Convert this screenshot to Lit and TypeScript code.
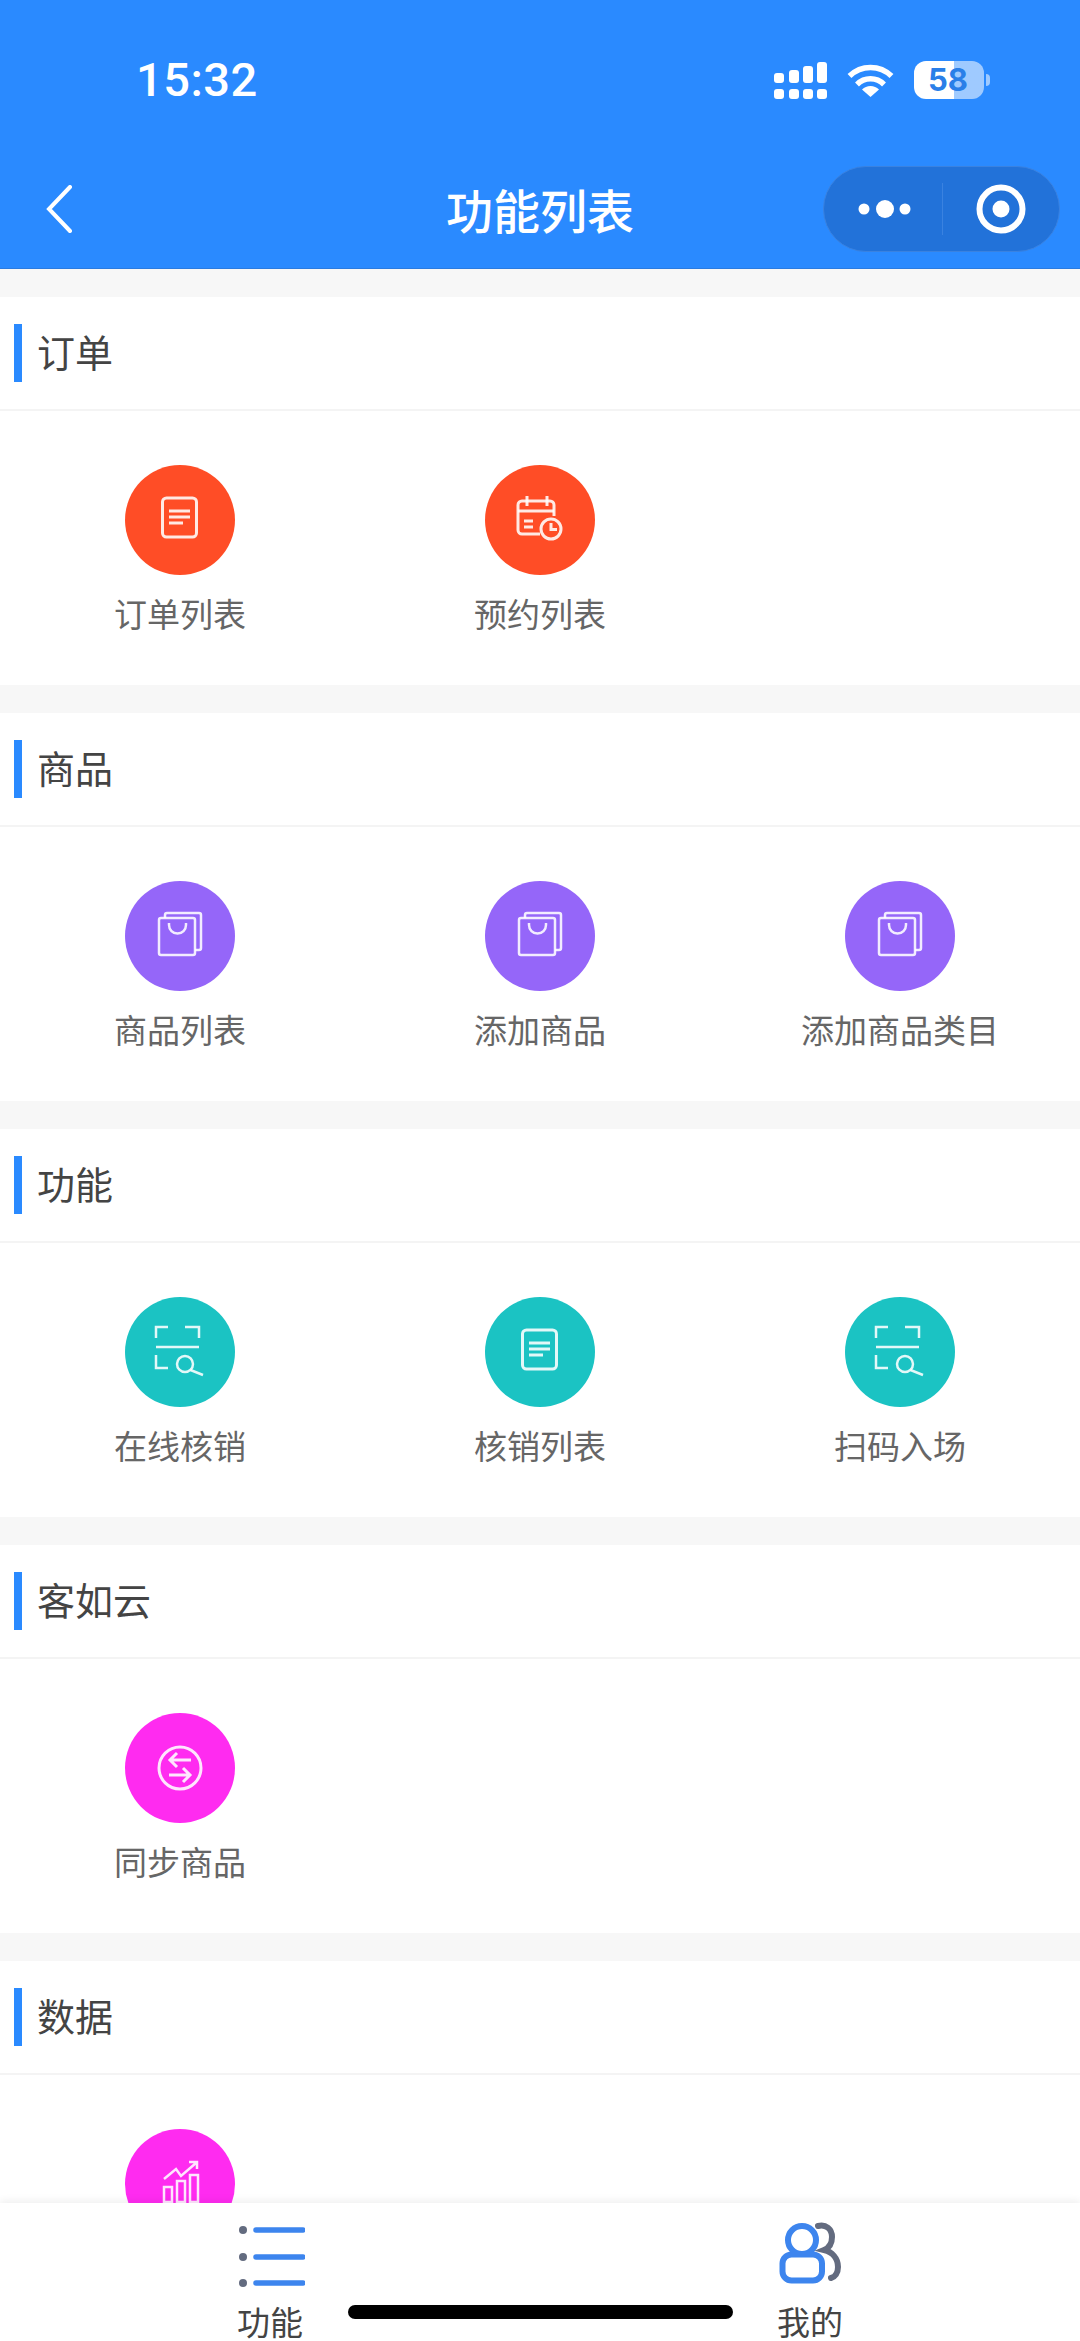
import { html, css, svg, LitElement } from 'lit';
import { customElement } from 'lit/decorators.js';

// icons are drawn in the 110px circle's own coordinates
const ICONS = {
  doc: svg`<rect x="37.5" y="33" width="34" height="39" rx="4"/><path d="M44 46h21M44 52h21M44 58h14"/>`,
  calendar: svg`<path d="M55 69H37a4 4 0 0 1-4-4V40a4 4 0 0 1 4-4h28a4 4 0 0 1 4 4v11"/><path d="M42 31v10M62 31v10M33 46h36M39 56h9M39 62h9"/><circle cx="66" cy="64" r="10"/><path d="M66 58v6.500h6"/>`,
  bag: svg`<g stroke-width="2.500"><path d="M40 37v-3a2 2 0 0 1 2-2h32a2 2 0 0 1 2 2v33a2 2 0 0 1-2 2h-4"/><rect x="34" y="37" width="36" height="37" rx="2"/><path d="M44 42v2a8.500 8.500 0 0 0 17 0v-2"/></g>`,
  scan: svg`<g stroke-width="2.500"><path d="M43 30H31v11M60 30h14v11M31 50h43M31 58v13h12"/><circle cx="60" cy="67" r="8"/><path d="M65.500 73L78 78"/></g>`,
  sync: svg`<circle cx="55" cy="55" r="21"/><path d="M66 47H45M52 40l-7 7 7 7M44 62h21M58 55l7 7-7 7"/>`,
  chart: svg`<g stroke-width="2.500"><rect x="39" y="58" width="8" height="15"/><rect x="52" y="52" width="8" height="21"/><rect x="65" y="46" width="8" height="27"/><path d="M39 50l12-10 5 7 15-13M64 33h8v7"/></g>`,
};

type IconName = keyof typeof ICONS;

const SECTIONS: { title: string; color: string; items: [string, IconName][] }[] = [
  { title: '订单', color: '#ff4d26', items: [['订单列表', 'doc'], ['预约列表', 'calendar']] },
  { title: '商品', color: '#9566f9', items: [['商品列表', 'bag'], ['添加商品', 'bag'], ['添加商品类目', 'bag']] },
  { title: '功能', color: '#1bc3c3', items: [['在线核销', 'scan'], ['核销列表', 'doc'], ['扫码入场', 'scan']] },
  { title: '客如云', color: '#ff2bf0', items: [['同步商品', 'sync']] },
  // the label of this one sits under the tab bar
  { title: '数据', color: '#ff2bf0', items: [['', 'chart']] },
];

@customElement('app-root')
export class AppRoot extends LitElement {
  static override styles = css`
    :host {
      display: flex;
      flex-direction: column;
      position: relative;
      width: 1080px;
      height: 2341px;
      overflow: hidden;
      background: #f7f7f7;
      font-family: 'Noto Sans CJK SC', 'Liberation Sans', sans-serif;
    }
    .header {
      flex: none;
      height: 269px;
      box-sizing: border-box;
      background: #2a8aff;
      border-bottom: 1px solid #2a7be0;
      color: #fff;
    }
    .status {
      display: flex;
      align-items: center;
      justify-content: space-between;
      height: 40px;
      padding: 60px 90px 0 136px;
    }
    .time {
      font: 500 47px/40px Roboto, sans-serif;
      letter-spacing: 0.5px;
    }
    .status-icons {
      display: flex;
      align-items: center;
      gap: 20px;
    }
    .status-icons svg {
      display: block;
      fill: #fff;
    }
    .wifi path.arc {
      fill: none;
      stroke: #fff;
      stroke-width: 5.5;
    }
    .battery {
      display: flex;
      align-items: center;
      gap: 2px;
    }
    .battery-body {
      width: 70px;
      height: 38px;
      border-radius: 12px;
      background: linear-gradient(90deg, #fff 57%, rgba(255, 255, 255, 0.55) 57%);
      color: #2a7fe8;
      font: 700 31px/38px Inter, sans-serif;
      text-align: center;
      box-sizing: border-box;
      padding-right: 2px;
    }
    .battery-tip {
      width: 4px;
      height: 12px;
      border-radius: 0 4px 4px 0;
      background: rgba(255, 255, 255, 0.55);
    }
    .nav {
      display: grid;
      grid-template-columns: 1fr auto 1fr;
      align-items: center;
      height: 86px;
      margin-top: 66px;
      padding: 0 20px;
    }
    .back {
      display: block;
      margin-left: 26px;
    }
    .nav-title {
      font-size: 47px;
      font-weight: 500;
      line-height: 60px;
    }
    .capsule {
      justify-self: end;
      display: flex;
      align-items: center;
      width: 237px;
      height: 86px;
      box-sizing: border-box;
      border: 1px solid #3a82e0;
      border-radius: 43px;
      background: #2272d9;
    }
    .capsule-part {
      flex: 1;
      display: flex;
      align-items: center;
      justify-content: center;
    }
    .capsule-more {
      flex: none;
      width: 118px;
      box-sizing: border-box;
      padding-left: 12px;
    }
    .capsule-line {
      width: 1px;
      height: 52px;
      background: #3a82e0;
    }
    .content {
      flex: 1;
      min-height: 0;
      overflow: hidden;
      padding-top: 28px;
    }
    .section {
      height: 388px;
      margin-bottom: 28px;
      background: #fff;
    }
    .section-head {
      display: flex;
      align-items: center;
      gap: 15px;
      height: 112px;
      box-sizing: content-box;
      padding-left: 14px;
      border-bottom: 2px solid #f4f4f4;
    }
    .section-bar {
      width: 8px;
      height: 58px;
      background: #2a8aff;
    }
    .section-title {
      margin-bottom: 4px;
      color: #444;
      font-size: 38px;
      line-height: 50px;
    }
    .grid {
      display: grid;
      grid-template-columns: repeat(3, 360px);
      padding-top: 54px;
    }
    .item {
      display: flex;
      flex-direction: column;
      align-items: center;
      gap: 16px;
    }
    .circle {
      display: block;
      width: 110px;
      height: 110px;
      border-radius: 50%;
      fill: none;
      stroke: rgba(255, 255, 255, 0.88);
      stroke-width: 3;
    }
    .label {
      color: #666;
      font-size: 33px;
      line-height: 44px;
    }
    .tabbar {
      flex: none;
      display: grid;
      grid-template-columns: 1fr 1fr;
      height: 138px;
      background: #fff;
      box-shadow: 0 -2px 8px rgba(0, 0, 0, 0.07);
      z-index: 1;
    }
    .tab {
      display: flex;
      flex-direction: column;
      align-items: center;
      padding-top: 16px;
    }
    .tab svg {
      display: block;
      fill: none;
      stroke-linecap: round;
      stroke-width: 6;
    }
    .tab-label {
      margin-top: 12px;
      color: #444;
      font-size: 33px;
      line-height: 40px;
    }
    .home-bar {
      position: absolute;
      left: 348px;
      top: 2305px;
      width: 385px;
      height: 14px;
      border-radius: 7px;
      background: #000;
      z-index: 2;
    }
  `;

  override render() {
    return html`
      <div class="header">
        <div class="status">
          <span class="time">15:32</span>
          <div class="status-icons">
            <svg width="53" height="37" viewBox="0 0 53 37">
              ${[[0, 11], [15, 8], [29, 4], [43, 0]].map(
                ([x, y]) => svg`<rect x=${x} y=${y} width="10" height=${21 - y} rx="3"/><rect x=${x} y="27" width="10" height="10" rx="3"/>`
              )}
            </svg>
            <svg class="wifi" width="47" height="34" viewBox="0 0 47 34">
              <path class="arc" d="M2.500 13a30 30 0 0 1 42 0"/>
              <path class="arc" d="M10 21.500a19 19 0 0 1 27 0"/>
              <path d="M15 26.500a12 12 0 0 1 17 0l-8.500 7.500z"/>
            </svg>
            <div class="battery">
              <div class="battery-body">58</div>
              <div class="battery-tip"></div>
            </div>
          </div>
        </div>
        <div class="nav">
          <svg class="back" width="28" height="48" viewBox="0 0 28 48" fill="none" stroke="#fff" stroke-width="4" stroke-linecap="round">
            <path d="M24 2L3 24l21 22"/>
          </svg>
          <div class="nav-title">功能列表</div>
          <div class="capsule">
            <div class="capsule-part capsule-more">
              <svg width="62" height="20" viewBox="0 0 62 20" fill="#fff">
                <circle cx="6" cy="10" r="5.500"/><circle cx="27" cy="10" r="9"/><circle cx="47" cy="10" r="5.500"/>
              </svg>
            </div>
            <div class="capsule-line"></div>
            <div class="capsule-part">
              <svg width="50" height="50" viewBox="0 0 50 50">
                <circle cx="25" cy="25" r="21.500" fill="none" stroke="#fff" stroke-width="6"/>
                <circle cx="25" cy="25" r="8.500" fill="#fff"/>
              </svg>
            </div>
          </div>
        </div>
      </div>
      <div class="content">
        ${SECTIONS.map(
          (s) => html`
            <div class="section">
              <div class="section-head">
                <div class="section-bar"></div>
                <div class="section-title">${s.title}</div>
              </div>
              <div class="grid">
                ${s.items.map(
                  ([label, icon]) => html`
                    <div class="item">
                      <svg class="circle" viewBox="0 0 110 110" style="background:${s.color}">${ICONS[icon]}</svg>
                      ${label ? html`<div class="label">${label}</div>` : ''}
                    </div>
                  `
                )}
              </div>
            </div>
          `
        )}
      </div>
      <div class="tabbar">
        <div class="tab">
          <svg width="70" height="70" viewBox="0 0 70 70">
            <g fill="#636b7f"><circle cx="8" cy="11" r="4"/><circle cx="8" cy="38" r="4"/><circle cx="8" cy="64" r="4"/></g>
            <path d="M21 11h47M21 38h47M21 64h47" stroke="#3d85ee" stroke-width="5.500"/>
          </svg>
          <div class="tab-label">功能</div>
        </div>
        <div class="tab">
          <svg width="70" height="70" viewBox="0 0 70 70">
            <circle cx="27" cy="21" r="14" stroke="#3d85ee"/>
            <rect x="7.500" y="35.500" width="39.500" height="26" rx="9" stroke="#3d85ee"/>
            <path d="M43 7c8-2 14 3 14 11 0 6-3 11-8 13 8 2 14 8 14 17 0 6-3 10-7 11" stroke="#636b7f"/>
          </svg>
          <div class="tab-label">我的</div>
        </div>
      </div>
      <div class="home-bar"></div>
    `;
  }
}

declare global {
  interface HTMLElementTagNameMap {
    'app-root': AppRoot;
  }
}
